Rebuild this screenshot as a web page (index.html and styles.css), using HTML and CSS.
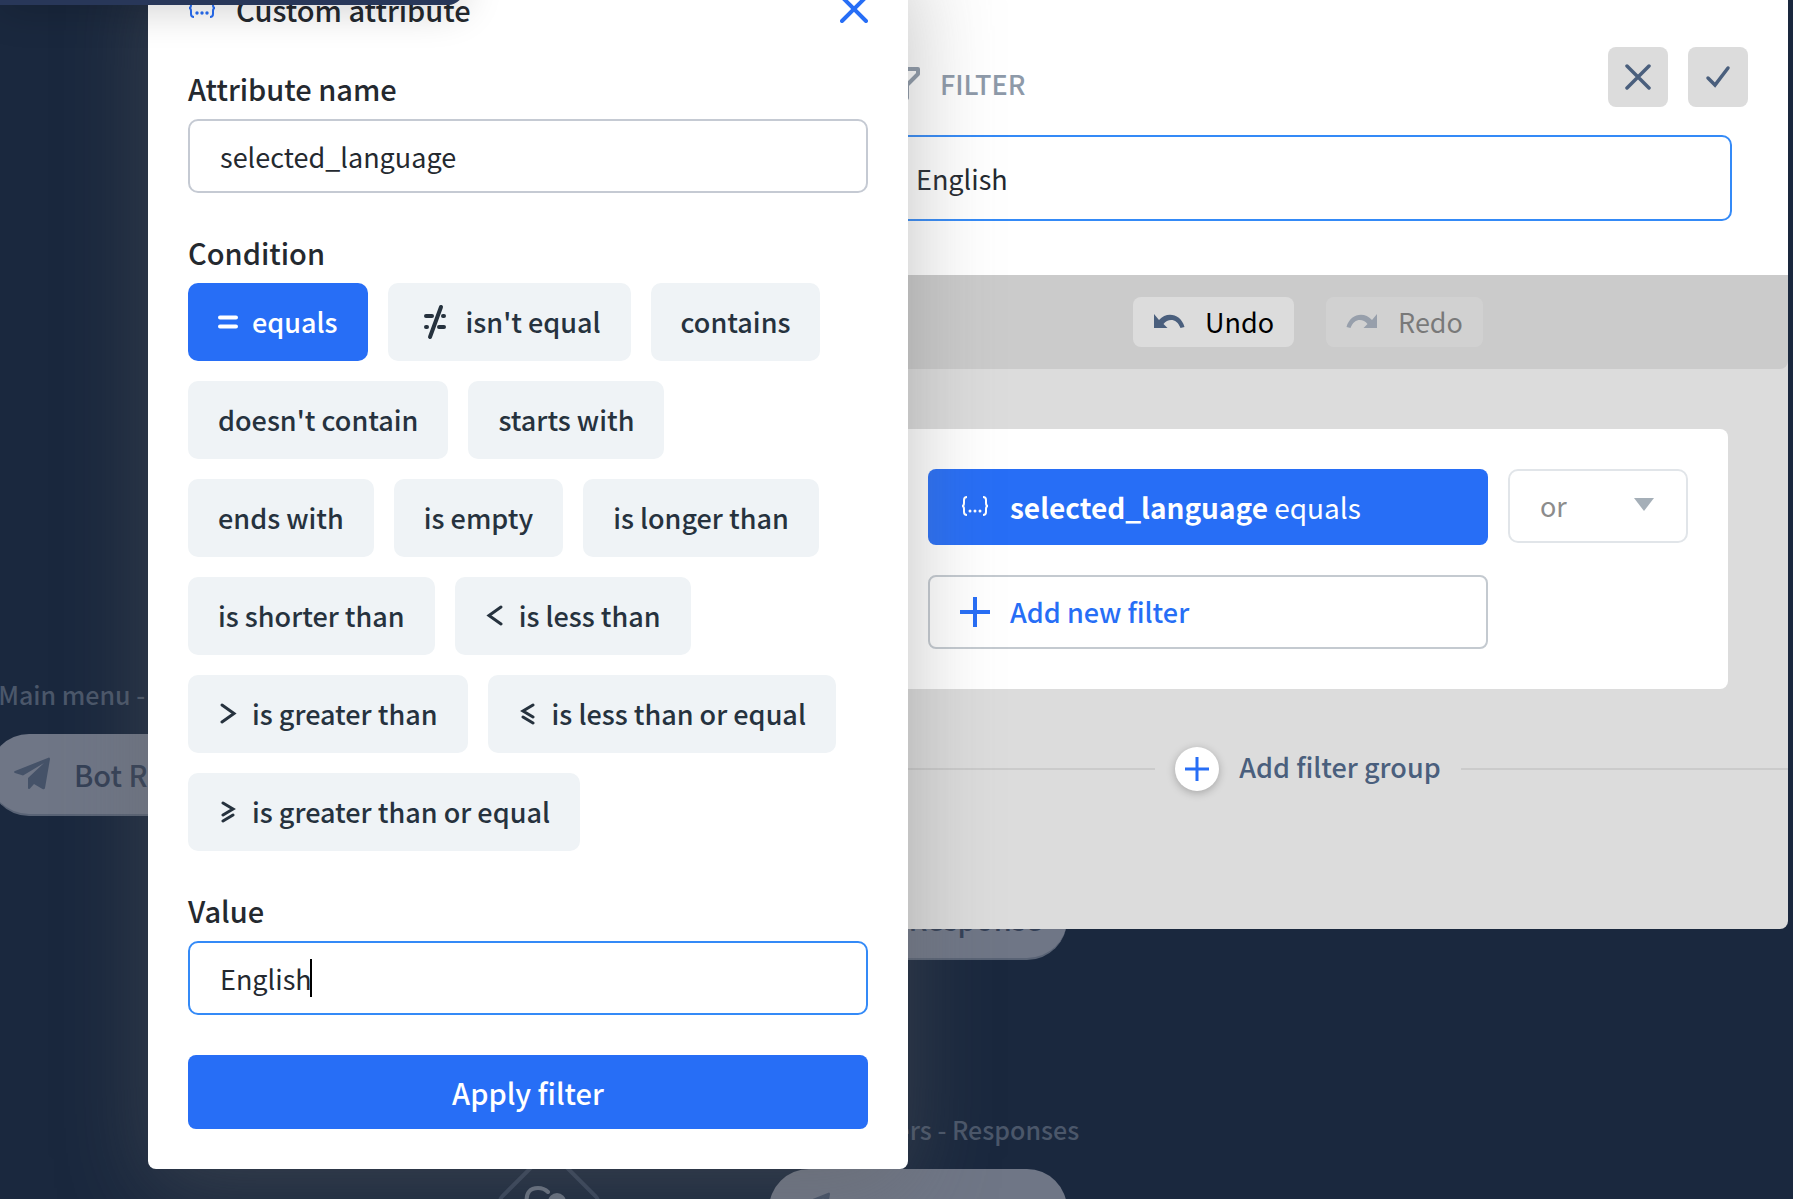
FILE: index.html
```html
<!DOCTYPE html>
<html lang="en">
<head>
  <meta charset="UTF-8">
  <title>Filter</title>
  <link rel="stylesheet" href="styles.css">
</head>
<body>
  <!-- Flow canvas -->
  <div class="canvas">
    <div class="node node-menu">
      <span class="node-title">Main menu - Responses</span>
      <div class="node-pill">
        <svg class="plane" viewBox="0 0 36 34"><path d="M35 .5Q36 .5 36 2L31 31Q30.500 33 28.500 32L20 27 16 31.500Q14 33 14 30.500V21L30 6 9 18.500 1 16Q-1 15 1 14Z"/></svg>
        Bot Response
      </div>
    </div>
    <div class="node node-second">
      <div class="node-pill">
        <svg class="plane" viewBox="0 0 36 34"><path d="M35 .5Q36 .5 36 2L31 31Q30.500 33 28.500 32L20 27 16 31.500Q14 33 14 30.500V21L30 6 9 18.500 1 16Q-1 15 1 14Z"/></svg>
        Bot Response
      </div>
    </div>
    <div class="node node-third">
      <span class="node-title">Regular orders - Responses</span>
      <div class="node-pill">
        <svg class="plane" viewBox="0 0 36 34"><path d="M35 .5Q36 .5 36 2L31 31Q30.500 33 28.500 32L20 27 16 31.500Q14 33 14 30.500V21L30 6 9 18.500 1 16Q-1 15 1 14Z"/></svg>
        Bot Response
      </div>
    </div>
    <svg class="diamond" viewBox="0 0 120 120">
      <rect x="23" y="23" width="74" height="74" rx="8" transform="rotate(45 60 60)" fill="none" stroke="#35435a" stroke-width="4"/>
      <path d="M38 62C36 50 42 46 49 46Q55 46 59 50" fill="none" stroke="#687283" stroke-width="4" stroke-linecap="round"/>
      <circle cx="68" cy="60" r="9" fill="#687283"/>
    </svg>
  </div>

  <!-- Filter panel -->
  <section class="panel">
    <header class="panel-head">
      <div class="panel-title">
        <svg width="34" height="34" viewBox="0 0 34 34"><path d="M2 2H32V7L21 18V31L13 25V18L2 7Z" fill="none" stroke="#8e9aa9" stroke-width="4" stroke-linejoin="round"/></svg>
        <h2>FILTER</h2>
        <button class="square" aria-label="Cancel">
          <svg width="26" height="26" viewBox="0 0 26 26"><path d="M2 2 24 24M24 2 2 24"/></svg>
        </button>
        <button class="square" aria-label="Save">
          <svg width="26" height="26" viewBox="0 0 26 26"><path d="M3 14 10 21 23 4"/></svg>
        </button>
      </div>
      <input class="name-input" type="text" value="English" aria-label="Filter name">
    </header>

    <div class="toolbar">
      <button class="tool">
        <svg width="32" height="20" viewBox="0 0 32 20"><path d="M1 2V16H14.500L10.500 12C15 6 24 6 27.500 16L31.500 15C28 2 14-1 6 8Z"/></svg>
        Undo
      </button>
      <button class="tool" disabled>
        <svg width="32" height="20" viewBox="0 0 32 20"><path d="M31 2V16H17.500L21.500 12C17 6 8 6 4.500 16L.5 15C4 2 18-1 26 8Z"/></svg>
        Redo
      </button>
    </div>

    <div class="group">
      <div class="group-row">
        <button class="filter-btn active">
          <svg width="30" height="22" viewBox="0 0 30 22"><path d="M7 1Q4 1 4 4V7Q4 10 2 10Q4 10 4 13V16Q4 19 7 19M23 1Q26 1 26 4V7Q26 10 28 10Q26 10 26 13V16Q26 19 23 19" fill="none" stroke="currentColor" stroke-width="2"/><g fill="currentColor"><circle cx="10" cy="15" r="1.500"/><circle cx="15" cy="15" r="1.500"/><circle cx="20" cy="15" r="1.500"/></g></svg>
          <span><b>selected_language</b> equals</span>
        </button>
        <div class="select-wrap">
          <select class="operator" aria-label="Group operator">
            <option>or</option>
            <option>and</option>
          </select>
          <svg class="caret" width="20" height="14" viewBox="0 0 20 14"><path d="M0 1H20L10 14Z" fill="#a5afb8"/></svg>
        </div>
      </div>
      <div class="group-row">
        <button class="filter-btn add">
          <svg width="30" height="30" viewBox="0 0 30 30"><path d="M15 0V30M0 15H30" stroke="currentColor" stroke-width="4"/></svg>
          <span>Add new filter</span>
        </button>
      </div>
    </div>

    <div class="add-group">
      <button class="add-group-btn">
        <span class="circle"><svg width="24" height="24" viewBox="0 0 24 24"><path d="M12 0V24M0 12H24" stroke="#276ef6" stroke-width="3"/></svg></span>
        <span class="add-group-text">Add filter group</span>
      </button>
    </div>
  </section>

  <!-- Custom attribute popup -->
  <form class="popup">
    <div class="popup-head">
      <svg width="28" height="20" viewBox="0 0 28 20"><path d="M6 1Q3 1 3 4V6Q3 9 1 9Q3 9 3 12V15Q3 18 6 18M22 1Q25 1 25 4V6Q25 9 27 9Q25 9 25 12V15Q25 18 22 18" fill="none" stroke="#276ef6" stroke-width="2"/><g fill="#276ef6"><circle cx="9" cy="14" r="1.700"/><circle cx="14" cy="14" r="1.700"/><circle cx="19" cy="14" r="1.700"/></g></svg>
      <h2>Custom attribute</h2>
      <button type="button" class="close" aria-label="Close">
        <svg width="28" height="28" viewBox="0 0 28 28"><path d="M2 2 26 26M26 2 2 26" stroke="#276ef6" stroke-width="4" stroke-linecap="round"/></svg>
      </button>
    </div>

    <div class="field">
      <label class="label" for="attr">Attribute name</label>
      <input class="input" id="attr" type="text" value="selected_language">
    </div>

    <div class="field">
      <div class="label" id="cond">Condition</div>
      <div class="chips" role="group" aria-labelledby="cond">
        <button type="button" class="chip active"><svg width="20" height="22" viewBox="0 0 20 22"><path d="M2 6.500H18M2 15.500H18" stroke-width="4"/></svg>equals</button>
        <button type="button" class="chip"><svg width="34" height="38" viewBox="0 0 34 38"><path d="M8 13H14M8 24H9M25 13H26M21 24H26" stroke-width="4"/><path d="M23 4 12 34" stroke-width="4"/></svg>isn't equal</button>
        <button type="button" class="chip">contains</button>
        <button type="button" class="chip">doesn't contain</button>
        <button type="button" class="chip">starts with</button>
        <button type="button" class="chip">ends with</button>
        <button type="button" class="chip">is empty</button>
        <button type="button" class="chip">is longer than</button>
        <button type="button" class="chip">is shorter than</button>
        <button type="button" class="chip"><svg width="20" height="22" viewBox="0 0 20 22"><path d="M16 2 4 10.500 16 19"/></svg>is less than</button>
        <button type="button" class="chip"><svg width="20" height="22" viewBox="0 0 20 22"><path d="M4 2 16 10.500 4 19"/></svg>is greater than</button>
        <button type="button" class="chip"><svg width="20" height="22" viewBox="0 0 20 22"><path d="M15 2 5 8 15 14M5 14 15 20"/></svg>is less than or equal</button>
        <button type="button" class="chip"><svg width="20" height="22" viewBox="0 0 20 22"><path d="M5 2 15 8 5 14M15 14 5 20"/></svg>is greater than or equal</button>
      </div>
    </div>

    <div class="field">
      <label class="label" for="value">Value</label>
      <div class="input-wrap">
        <input class="input focused" id="value" type="text" value="English">
        <span class="text-cursor"></span>
      </div>
    </div>

    <button type="button" class="apply">Apply filter</button>
  </form>

  <div class="topbar"></div>
</body>
</html>
```
FILE: styles.css
```css
* {
  margin: 0;
  padding: 0;
  box-sizing: border-box;
}

body {
  position: relative;
  min-height: 100vh;
  overflow: hidden;
  background-color: #1a283e;
  font: 27px/40px "Noto Sans CJK SC", "Open Sans", sans-serif;
  color: #24292f;
}

button, input, select {
  font: inherit;
  color: inherit;
  outline: none;
}

button {
  border: none;
  cursor: pointer;
}

svg {
  display: block;
  flex: none;
}

/* canvas */
.canvas {
  position: absolute;
  inset: 0;
  overflow: hidden;
}

.node {
  position: absolute;
  width: 298px;
  display: flex;
  flex-direction: column;
  align-items: center;
  white-space: nowrap;
}

.node-menu {
  left: -11px;
  top: 674px;
}

.node-second {
  left: 769px;
  top: 878px;
}

.node-third {
  left: 769px;
  top: 1109px;
}

.node-title {
  height: 60px;
  font-size: 25px;
  font-weight: 500;
  color: #4b576a;
}

.node-pill {
  display: flex;
  align-items: center;
  gap: 24px;
  width: 100%;
  height: 82px;
  padding-left: 25px;
  border-radius: 40px;
  border-bottom: 2px solid #596375;
  background-color: #6f7686;
  color: #344056;
  font-size: 29px;
  font-weight: 500;
}

.plane {
  width: 36px;
  height: 34px;
  fill: #455268;
}

.diamond {
  position: absolute;
  left: 489px;
  top: 1142px;
  width: 120px;
}

/* filter panel */
.panel {
  position: absolute;
  top: 0;
  right: 5px;
  width: 960px;
  padding-bottom: 138px;
  border-radius: 0 0 8px 8px;
  background-color: #dcdcdc;
}

.panel-head {
  padding: 47px 40px 54px;
  background-color: white;
}

.panel-title {
  display: flex;
  align-items: center;
  gap: 20px;
  padding-left: 18px;
  margin-bottom: 28px;
}

.panel-title > svg {
  margin-top: 14px;
}

.panel-title h2 {
  flex: 1;
  padding-top: 14px;
  color: #8e9aa9;
  font-size: 27px;
  font-weight: 500;
}

.square {
  display: flex;
  align-items: center;
  justify-content: center;
  width: 60px;
  height: 60px;
  border-radius: 8px;
  background-color: #dcdcdc;
}

.square path {
  fill: none;
  stroke: #4a5f7d;
  stroke-width: 3.500;
  stroke-linecap: round;
}

.name-input {
  display: block;
  width: calc(100% - 16px);
  height: 86px;
  padding: 0 46px;
  border: 2px solid #348af7;
  border-radius: 10px;
  background-color: white;
}

.toolbar {
  display: flex;
  justify-content: center;
  gap: 32px;
  padding: 22px;
  border-radius: 0 0 8px 8px;
  background-color: #cbcbcb;
}

.tool {
  display: flex;
  align-items: center;
  gap: 20px;
  height: 50px;
  padding: 0 20px;
  border-radius: 8px;
  background-color: #dcdcdc;
  color: black;
}

.tool svg {
  fill: #4a5f7d;
}

.tool:disabled {
  opacity: 0.4;
}

.group {
  display: flex;
  flex-direction: column;
  gap: 30px;
  margin: 60px 60px 58px;
  padding: 40px;
  border-radius: 8px;
  background-color: white;
}

.group-row {
  display: flex;
  gap: 20px;
}

.filter-btn {
  display: flex;
  align-items: center;
  gap: 20px;
  width: 560px;
  height: 74px;
  padding: 0 32px;
  border-radius: 8px;
}

.filter-btn.active {
  height: 76px;
  background-color: #276ef6;
  color: white;
  font-size: 28px;
}

.filter-btn b {
  font-weight: 600;
}

.filter-btn.add {
  padding: 0 30px;
  border: 2px solid #c4cad0;
  background-color: white;
  color: #276ef6;
  font-weight: 500;
}

.select-wrap {
  position: relative;
  flex: 1;
}

.operator {
  width: 100%;
  height: 74px;
  padding: 0 30px;
  border: 2px solid #e1e5e9;
  border-radius: 10px;
  background-color: white;
  color: #8c8c8c;
  appearance: none;
}

.caret {
  position: absolute;
  top: 28px;
  right: 34px;
  pointer-events: none;
}

.add-group {
  display: flex;
  align-items: center;
  gap: 20px;
}

.add-group::before,
.add-group::after {
  content: "";
  flex: 1;
  height: 2px;
  background-color: #cbcbcb;
}

.add-group-btn {
  display: flex;
  align-items: center;
  gap: 20px;
  background: none;
  color: #4a5f7d;
  font-weight: 500;
}

.add-group-text {
  padding-bottom: 4px;
}

.circle {
  display: flex;
  align-items: center;
  justify-content: center;
  width: 44px;
  height: 44px;
  border-radius: 50%;
  background-color: white;
  box-shadow: 0 2px 8px rgba(0, 0, 0, 0.25);
}

/* popup */
.popup {
  position: absolute;
  top: -51px;
  left: 148px;
  width: 760px;
  display: flex;
  flex-direction: column;
  gap: 40px;
  padding: 40px;
  border-radius: 8px;
  background-color: white;
  box-shadow: 0 20px 90px rgba(100, 100, 100, 0.4);
}

.popup-head {
  display: flex;
  align-items: center;
  gap: 20px;
  height: 40px;
}

.popup-head h2 {
  flex: 1;
  font-size: 29px;
  line-height: 38px;
  font-weight: 500;
}

.close {
  background: none;
}

.label {
  display: block;
  margin-bottom: 12px;
  font-size: 29px;
  line-height: 38px;
  font-weight: 500;
}

.input-wrap {
  position: relative;
}

.input {
  display: block;
  width: 100%;
  height: 74px;
  padding: 0 30px;
  border: 2px solid #c5cad3;
  border-radius: 10px;
  background-color: white;
}

.input.focused {
  border-color: #348af7;
}

.text-cursor {
  position: absolute;
  top: 18px;
  left: 122px;
  width: 2px;
  height: 38px;
  background-color: black;
}

.chips {
  display: flex;
  flex-wrap: wrap;
  gap: 20px;
}

.chip {
  display: flex;
  align-items: center;
  gap: 14px;
  height: 78px;
  padding: 0 30px;
  border-radius: 10px;
  background-color: #eff3f6;
  color: #26323e;
  font-weight: 500;
}

.chip svg {
  fill: none;
  stroke: currentColor;
  stroke-width: 3;
  stroke-linecap: round;
}

.chip.active {
  background-color: #276ef6;
  color: white;
}

.apply {
  height: 74px;
  border-radius: 8px;
  background-color: #276ef6;
  color: white;
  font-size: 29px;
  font-weight: 500;
}

/* bar hanging over the popup */
.topbar {
  position: absolute;
  top: -35px;
  left: 0;
  width: 464px;
  height: 40px;
  border-radius: 0 0 16px 0;
  background-color: #283759;
  box-shadow: 0 4px 40px rgba(0, 0, 0, 0.2);
}
```
